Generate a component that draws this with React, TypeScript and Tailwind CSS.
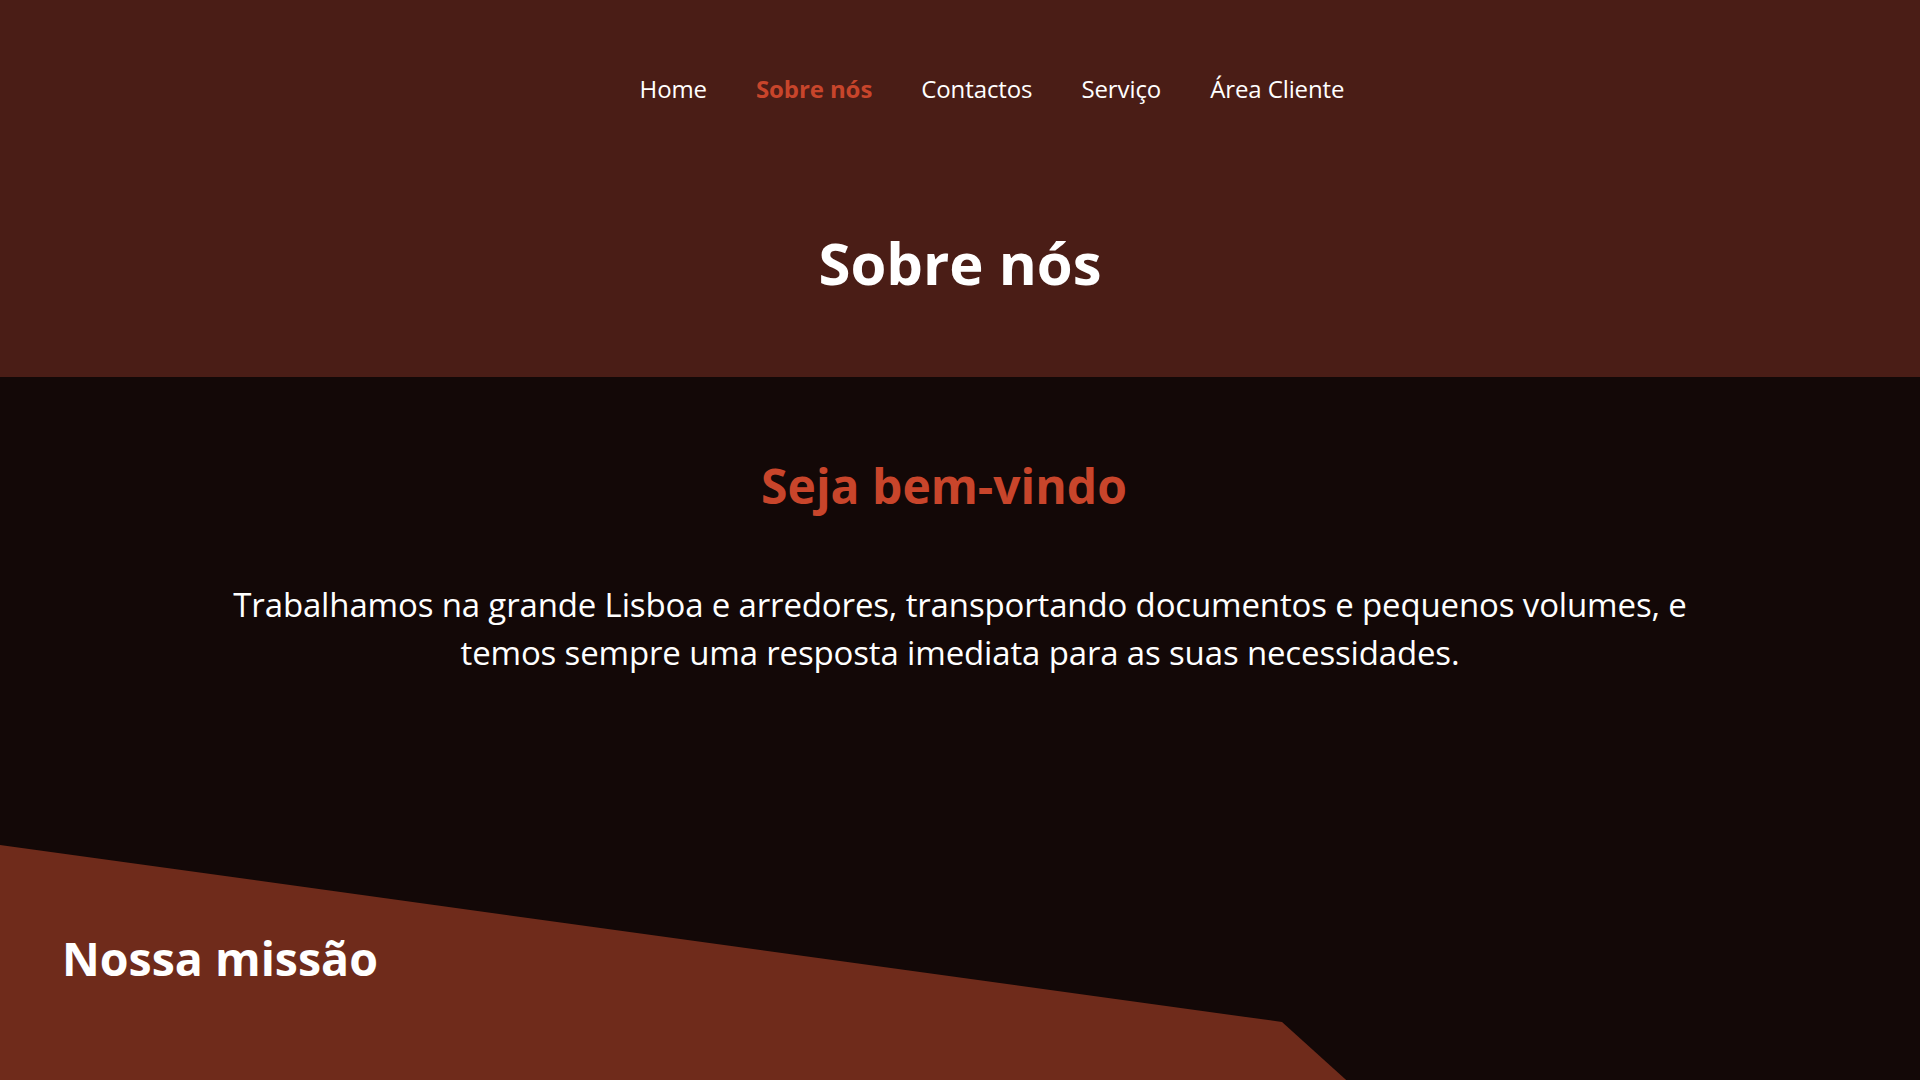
const navItems = ["Home", "Sobre nós", "Contactos", "Serviço", "Área Cliente"];

function Header() {
  return (
    <header className="bg-[#4a1d16] h-[377px] flex flex-col">
      <nav className="h-[178px] flex items-center justify-center gap-[49px] pl-16">
        {navItems.map((item) => (
          <a
            key={item}
            href="#"
            className={
              item === "Sobre nós"
                ? "text-[24px] font-bold text-[#c8452b] tracking-[-0.1px]"
                : "text-[24px] text-white tracking-[-0.1px]"
            }
          >
            {item}
          </a>
        ))}
      </nav>
      <h1 className="pt-[56px] text-center text-[58px] leading-none font-bold text-white">
        Sobre nós
      </h1>
    </header>
  );
}

function Welcome() {
  return (
    <section className="bg-[#130807] h-[468px] flex flex-col items-center">
      <h2 className="mt-[85px] pr-8 text-[48px] leading-none font-bold text-[#c8452b]">
        Seja bem-vindo
      </h2>
      <p className="mt-[71px] text-center text-[33px] leading-[48px] text-white tracking-[-0.15px]">
        Trabalhamos na grande Lisboa e arredores, transportando documentos e pequenos volumes, e
        <br />
        temos sempre uma resposta imediata para as suas necessidades.
      </p>
    </section>
  );
}

function Mission() {
  return (
    <section className="relative bg-[#130807] h-[420px]">
      <div className="absolute inset-0 bg-[#6f2b1b] [clip-path:polygon(0_0,1282px_177px,1551px_420px,0_100%)]" />
      <h2 className="relative pt-[90px] pl-[62px] text-[46.5px] leading-none font-bold text-white">
        Nossa missão
      </h2>
    </section>
  );
}

export default function App() {
  return (
    <div className="min-h-screen bg-[#130807] font-['Open_Sans',sans-serif]">
      <Header />
      <Welcome />
      <Mission />
    </div>
  );
}
